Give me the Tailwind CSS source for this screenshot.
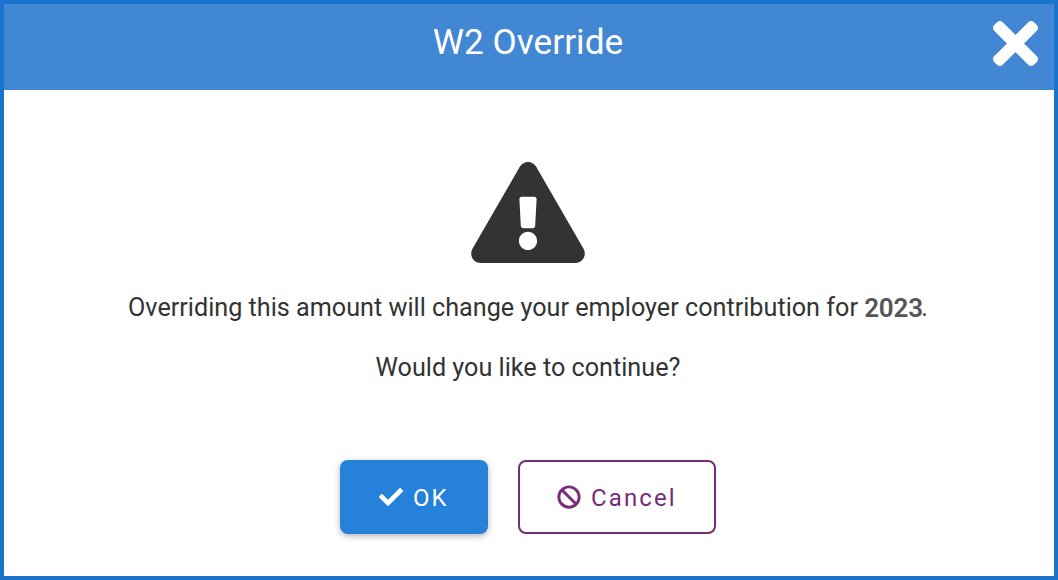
<!DOCTYPE html>
<html lang="en">
<head>
    <meta charset="UTF-8" />
    <meta name="viewport" content="width=device-width, initial-scale=1.0" />
    <title>W2 Override</title>
    <script src="https://cdn.jsdelivr.net/npm/@tailwindcss/browser@4"></script>
</head>
<body class="font-['Roboto',sans-serif] bg-white text-[#333333]">
    <div role="dialog" aria-labelledby="dialog-title" class="h-[580px] w-[1058px] border-4 border-[#1a74ce] bg-white flex flex-col">
        <!-- Title bar -->
        <header class="relative h-[86px] shrink-0 bg-[#4287d3] text-white flex items-center justify-center pb-[11px] pr-0.5">
            <h1 id="dialog-title" class="text-[35.2px] leading-10 whitespace-nowrap">W2 Override</h1>
            <button type="button" aria-label="Close" class="absolute right-4 top-[17px]">
                <svg class="size-[45px]" viewBox="0 80 352 352" fill="currentColor"><path d="M242.72 256l100.07-100.07c12.28-12.28 12.28-32.19 0-44.48l-22.24-22.24c-12.28-12.28-32.19-12.28-44.48 0L176 189.28 75.93 89.21c-12.28-12.28-32.19-12.28-44.48 0L9.21 111.45c-12.28 12.28-12.28 32.19 0 44.48L109.28 256 9.21 356.07c-12.28 12.28-12.28 32.19 0 44.48l22.24 22.24c12.28 12.28 32.2 12.28 44.48 0L176 322.72l100.07 100.07c12.28 12.28 32.2 12.28 44.48 0l22.24-22.24c12.28-12.28 12.28-32.19 0-44.48L242.72 256z"/></svg>
            </button>
        </header>

        <!-- Warning message -->
        <main class="flex flex-col items-center pt-[72px] pr-0.5">
            <svg class="h-[101px] w-[114px]" viewBox="0 0 576 512" fill="currentColor"><path d="M569.517 440.013C587.975 472.007 564.806 512 527.94 512H48.054c-36.937 0-59.999-40.055-41.577-71.987L246.423 23.985c18.467-32.009 64.72-31.951 83.154 0l239.94 416.028zM288 354c-25.405 0-46 20.595-46 46s20.595 46 46 46 46-20.595 46-46-20.595-46-46-46zm-43.673-165.346l7.418 136c.347 6.364 5.609 11.346 11.982 11.346h48.546c6.373 0 11.635-4.982 11.982-11.346l7.418-136c.375-6.874-5.098-12.654-11.982-12.654h-63.383c-6.884 0-12.356 5.78-11.981 12.654z"/></svg>
            <p class="mt-[30px] h-[30px] text-[25.2px] leading-[30px] whitespace-nowrap">Overriding this amount will change your employer contribution for <span class="text-[26px] leading-none align-[-1px] font-semibold tracking-[-0.2px] text-[#555555] mr-[-1.5px]">2023</span>.</p>
            <p class="mt-[30px] text-[25.2px] leading-[30px] whitespace-nowrap">Would you like to continue?</p>

            <!-- Actions -->
            <div class="mt-[77px] flex gap-[30px] text-2xl tracking-[2.1px]">
                <button type="button" class="h-[74px] w-[148px] rounded-lg bg-[#2581d9] text-white shadow-[0_2px_6px_rgba(0,0,0,0.3)] flex items-center pl-[39px] gap-[10px]">
                    <svg class="size-6 shrink-0" viewBox="0 0 512 512" fill="currentColor"><path d="M173.898 439.404l-166.4-166.4c-9.997-9.997-9.997-26.206 0-36.204l36.203-36.204c9.997-9.998 26.207-9.998 36.204 0L192 312.69 432.095 72.596c9.997-9.997 26.207-9.997 36.204 0l36.203 36.204c9.997 9.997 9.997 26.206 0 36.204l-294.4 294.401c-9.998 9.997-26.207 9.997-36.204-.001z"/></svg>
                    <span class="pt-0.5">OK</span>
                </button>
                <button type="button" class="h-[74px] w-[198px] rounded-lg border-2 border-[#762c79] bg-white text-[#762c79] flex items-center pl-[37px] gap-[10px]">
                    <svg class="size-6 shrink-0" viewBox="0 0 512 512" fill="currentColor"><path d="M256 8C119.034 8 8 119.033 8 256s111.034 248 248 248 248-111.034 248-248S392.967 8 256 8zm130.108 117.892c65.448 65.448 70 165.481 20.677 235.637L150.47 105.216c70.204-49.356 170.226-44.735 235.638 20.676zM125.892 386.108c-65.448-65.448-70-165.481-20.677-235.637L361.53 406.784c-70.203 49.356-170.226 44.736-235.638-20.676z"/></svg>
                    <span class="pt-0.5">Cancel</span>
                </button>
            </div>
        </main>
    </div>
</body>
</html>
